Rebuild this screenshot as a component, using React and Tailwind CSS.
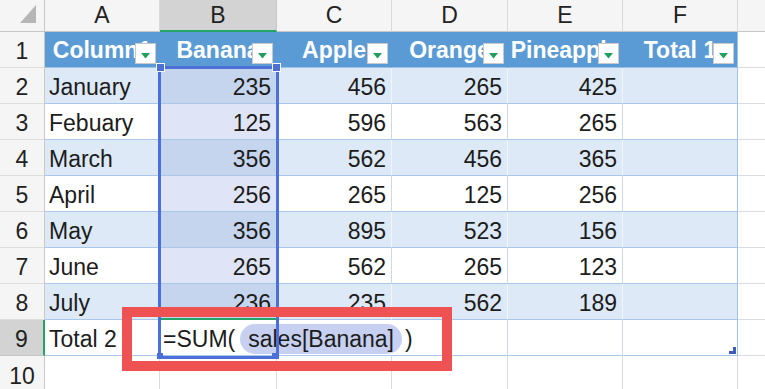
import React from "react";

const rows = [
  ["January", 235, 456, 265, 425],
  ["Febuary", 125, 596, 563, 265],
  ["March", 356, 562, 456, 365],
  ["April", 256, 265, 125, 256],
  ["May", 356, 895, 523, 156],
  ["June", 265, 562, 265, 123],
  ["July", 236, 235, 562, 189],
];

const headers = ["Column1", "Banana", "Apple", "Orange", "Pineapple", "Total 1"];
const letters = ["A", "B", "C", "D", "E", "F"];

function FilterButton() {
  return (
    <div className="absolute right-[3px] bottom-[3px] w-[21px] h-[21px] bg-white border border-[#c9c9c9] flex items-end justify-center pb-[4px]">
      <svg width="9" height="6" viewBox="0 0 9 6">
        <polygon points="0,0 9,0 4.5,5.5" fill="#1fa05e" />
      </svg>
    </div>
  );
}

function RowHead({ n, selected }) {
  return (
    <div
      className={
        selected
          ? "flex items-center justify-center pt-[3px] bg-[#d3d3d3] border-r-2 border-r-[#22a566] border-b border-b-[#c6c6c6] text-[#222]"
          : "flex items-center justify-center pt-[3px] bg-[#f5f5f5] border-r border-r-[#c8c8c8] border-b border-b-[#dcdcdc] text-[#222]"
      }
    >
      {n}
    </div>
  );
}

export default function App() {
  return (
    <div className="relative w-[765px] h-[389px] overflow-hidden bg-white text-[23px] font-['Liberation_Sans',Arial,sans-serif] text-[#1c1c1c]">
      <div className="grid grid-cols-[45px_115px_117px_115px_116px_115px_115px_1fr] grid-rows-[32px_repeat(9,36px)_1fr] h-full">
        {/* column headers */}
        <div className="relative bg-[#f5f5f5] border-r border-r-[#c8c8c8] border-b border-b-[#c6c6c6]">
          <svg className="absolute left-[20px] top-[5px]" width="16" height="18" viewBox="0 0 16 18">
            <polygon points="16,0 16,18 0,18" fill="#b6b6b6" />
          </svg>
        </div>
        {letters.map((l) => (
          <div
            key={l}
            className={
              l === "B"
                ? "flex items-center justify-center bg-[#d3d3d3] border-r border-r-[#c6c6c6] border-b-2 border-b-[#22a566] text-[#222]"
                : "flex items-center justify-center bg-[#f5f5f5] border-r border-r-[#d9d9d9] border-b border-b-[#c6c6c6] text-[#222]"
            }
          >
            {l}
          </div>
        ))}
        <div className="bg-[#f5f5f5] border-b border-b-[#c6c6c6]" />

        {/* row 1: table header */}
        <RowHead n={1} />
        {headers.map((h, i) => (
          <div
            key={h}
            className={
              i === 5
                ? "relative overflow-hidden flex items-center justify-center pt-[2px] whitespace-nowrap font-bold text-white bg-[#5b9bd5] border-r border-r-[#9bc2e6] border-b border-b-[#9bc2e6]"
                : "relative overflow-hidden flex items-center justify-center pt-[2px] whitespace-nowrap font-bold text-white bg-[#5b9bd5] border-r border-r-[#5b9bd5] border-b border-b-[#9bc2e6]"
            }
          >
            {h}
            <FilterButton />
          </div>
        ))}
        <div className="border-b border-b-[#d8dce3]" />

        {/* data rows */}
        {rows.map((r, ri) => {
          const band = ri % 2 === 0;
          const n = ri + 2;
          return (
            <React.Fragment key={n}>
              <RowHead n={n} />
              <div
                className={
                  band
                    ? "flex items-center pl-[4px] pt-[3px] bg-[#dde9f6] border-r border-r-[#f0f5fb] border-b border-b-[#a9c7e8]"
                    : "flex items-center pl-[4px] pt-[3px] bg-white border-r border-r-[#ccd9eb] border-b border-b-[#a9c7e8]"
                }
              >
                {r[0]}
              </div>
              <div
                className={
                  band
                    ? "flex items-center justify-end pr-[6px] pt-[3px] bg-[#c5d5ee] border-b border-b-[#a9c7e8]"
                    : "flex items-center justify-end pr-[6px] pt-[3px] bg-[#dfe5f6] border-b border-b-[#a9c7e8]"
                }
              >
                {r[1]}
              </div>
              {r.slice(2).map((v, ci) => (
                <div
                  key={ci}
                  className={
                    band
                      ? "flex items-center justify-end pr-[5px] pt-[3px] bg-[#dde9f6] border-r border-r-[#f0f5fb] border-b border-b-[#a9c7e8]"
                      : "flex items-center justify-end pr-[5px] pt-[3px] bg-white border-r border-r-[#ccd9eb] border-b border-b-[#a9c7e8]"
                  }
                >
                  {v}
                </div>
              ))}
              <div
                className={
                  band
                    ? "bg-[#dde9f6] border-r border-r-[#9bc2e6] border-b border-b-[#a9c7e8]"
                    : "bg-white border-r border-r-[#9bc2e6] border-b border-b-[#a9c7e8]"
                }
              />
              <div className="border-b border-b-[#d8dce3]" />
            </React.Fragment>
          );
        })}

        {/* row 9: total row */}
        <RowHead n={9} selected />
        <div className="flex items-center pl-[4px] pt-[3px] whitespace-nowrap overflow-hidden bg-white border-r border-r-[#ccd9eb] border-b border-b-[#a9c7e8]">
          Total 2
        </div>
        <div className="relative z-10 flex items-center pl-[3px] pt-[3px] whitespace-nowrap overflow-visible bg-white border-b border-b-[#a9c7e8]">
          <span>=SUM(</span>
          <span className="ml-[5px] h-[30px] flex items-center px-[8px] rounded-full bg-[#c7d0f0]">
            sales[Banana]
          </span>
          <span className="ml-[3px]">)</span>
        </div>
        <div className="bg-white border-b border-b-[#a9c7e8]" />
        <div className="bg-white border-r border-r-[#ccd9eb] border-b border-b-[#a9c7e8]" />
        <div className="bg-white border-r border-r-[#ccd9eb] border-b border-b-[#a9c7e8]" />
        <div className="relative bg-white border-r border-r-[#9bc2e6] border-b border-b-[#a9c7e8]">
          <svg className="absolute right-[1px] bottom-[1px]" width="7" height="7" viewBox="0 0 7 7">
            <polygon points="7,0 7,7 0,7 0,4 4,4 4,0" fill="#3f5cbf" />
          </svg>
        </div>
        <div className="border-b border-b-[#d8dce3]" />

        {/* row 10 */}
        <RowHead n={10} />
        <div className="border-r border-r-[#d8dce3]" />
        <div className="border-r border-r-[#d8dce3]" />
        <div className="border-r border-r-[#d8dce3]" />
        <div className="border-r border-r-[#d8dce3]" />
        <div className="border-r border-r-[#d8dce3]" />
        <div className="border-r border-r-[#d8dce3]" />
        <div />
      </div>

      {/* referenced range border */}
      <div className="absolute left-[158px] top-[66px] w-[121px] h-[293px] border-[3px] border-[#4d70d8] z-20 pointer-events-none" />
      <div className="absolute left-[156px] top-[63px] w-[9px] h-[9px] bg-[#4d70d8] border border-white z-20" />
      <div className="absolute left-[272px] top-[63px] w-[9px] h-[9px] bg-[#4d70d8] border border-white z-20" />
      <div className="absolute left-[157px] top-[353px] w-[6px] h-[6px] bg-[#4d70d8] z-20" />
      <div className="absolute left-[272px] top-[353px] w-[7px] h-[6px] bg-[#4d70d8] z-20" />

      {/* active cell top edge */}
      <div className="absolute left-[161px] top-[318px] w-[115px] h-[2px] bg-[#22a566] z-20" />

      {/* red highlight box */}
      <div className="absolute left-[122px] top-[307px] w-[330px] h-[64px] border-[10px] border-[#ee5252] z-30" />
    </div>
  );
}
